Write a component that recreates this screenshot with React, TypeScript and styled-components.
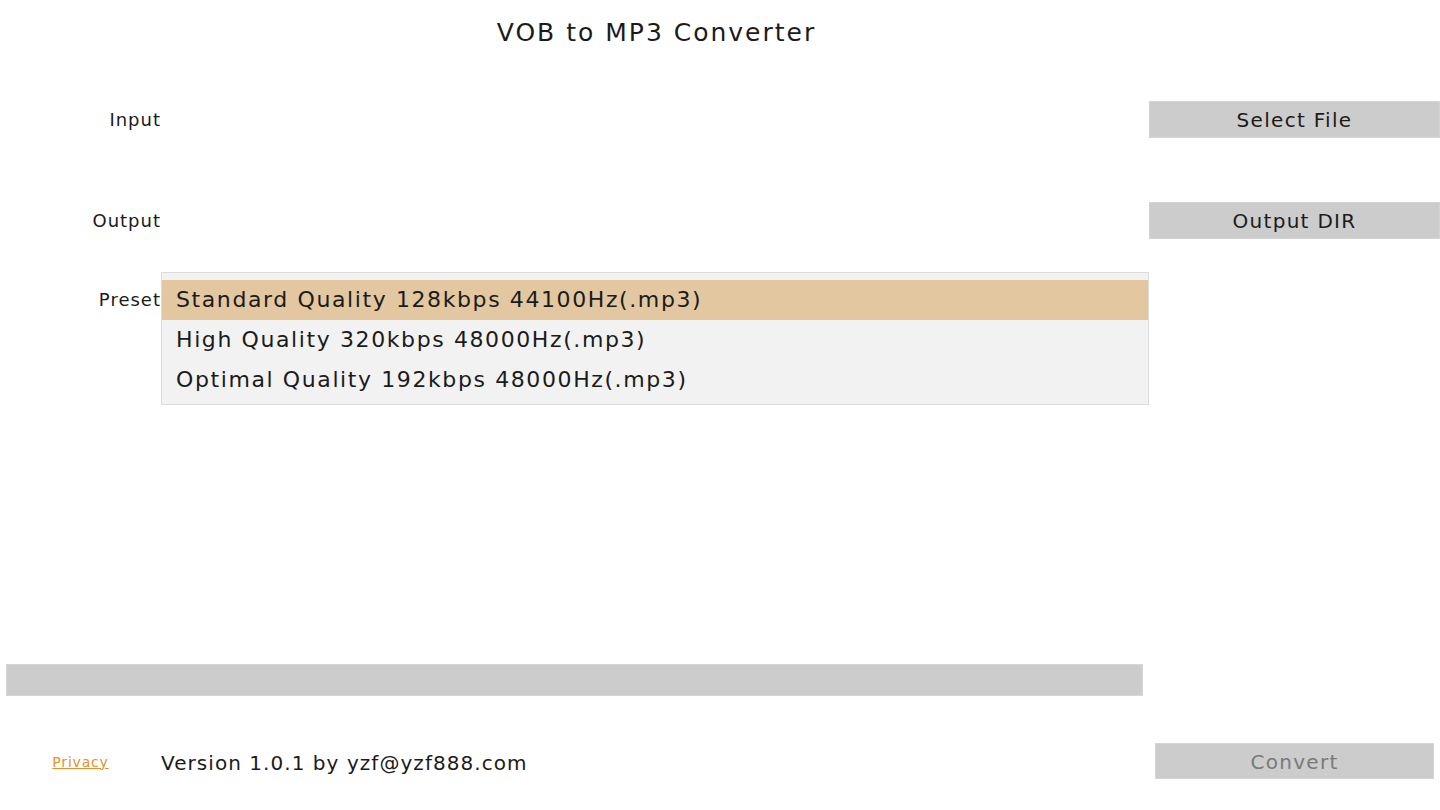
import React from "react";
import styled, { createGlobalStyle } from "styled-components";

const Global = createGlobalStyle`
  html, body { margin: 0; padding: 0; background: #ffffff; }
  body { font-family: "DejaVu Sans", "Open Sans", sans-serif; color: #1b1b1b; }
  * { box-sizing: border-box; }
`;

const Page = styled.div`
  width: 1440px;
  height: 810px;
  display: flex;
  flex-direction: column;
  overflow: hidden;
`;

const Title = styled.h1`
  width: 1313px;
  margin: 14px 0 0;
  font-size: 25px;
  line-height: 37px;
  font-weight: 400;
  letter-spacing: 2px;
  text-align: center;
`;

const Row = styled.div<{ $top: number }>`
  display: grid;
  grid-template-columns: 161px 988px 291px;
  margin-top: ${(p) => p.$top}px;
  align-items: center;
`;

const Label = styled.div<{ $start?: boolean }>`
  text-align: right;
  font-size: 18px;
  letter-spacing: 1px;
  line-height: 37px;
  padding-top: 1px;
  align-self: ${(p) => (p.$start ? "start" : "center")};
  margin-top: ${(p) => (p.$start ? "8px" : "0")};
`;

const Button = styled.button<{ $muted?: boolean }>`
  grid-column: 3;
  height: 37px;
  border: 1px solid #d4d4d4;
  background: #cccccc;
  font-family: inherit;
  font-size: 20px;
  letter-spacing: 1.3px;
  color: ${(p) => (p.$muted ? "#7a7a7a" : "#1b1b1b")};
  padding: 2px 0 0;
  cursor: pointer;
`;

const List = styled.div`
  grid-column: 2;
  border: 1px solid #dcdcdc;
  background: #f2f2f2;
  padding: 7px 0 4px;
  display: flex;
  flex-direction: column;
`;

const Option = styled.div<{ $selected?: boolean }>`
  height: 40px;
  line-height: 40px;
  padding-left: 14px;
  font-size: 22px;
  letter-spacing: 1.6px;
  background: ${(p) => (p.$selected ? "#e2c7a0" : "transparent")};
`;

const Progress = styled.div`
  margin: 259px 0 0 6px;
  width: 1137px;
  height: 32px;
  background: #cccccc;
  border: 1px solid #d6d6d6;
`;

const Footer = styled.div`
  display: grid;
  grid-template-columns: 161px 1fr 279px;
  align-items: center;
  margin-top: 47px;
  margin-right: 6px;
`;

const PrivacyLink = styled.a`
  text-align: center;
  color: #e0922e;
  font-size: 14px;
  letter-spacing: 0.8px;
  text-decoration: underline;
  cursor: pointer;
  padding-top: 1px;
`;

const Version = styled.div`
  font-size: 20px;
  letter-spacing: 1.05px;
  padding-top: 3px;
`;

const ConvertButton = styled(Button)`
  grid-column: 3;
  height: 36px;
`;

const options = [
  "Standard Quality 128kbps 44100Hz(.mp3)",
  "High Quality 320kbps 48000Hz(.mp3)",
  "Optimal Quality 192kbps 48000Hz(.mp3)",
];

export default function App() {
  return (
    <Page>
      <Global />
      <Title>VOB to MP3 Converter</Title>
      <Row $top={49}>
        <Label>Input</Label>
        <Button>Select File</Button>
      </Row>
      <Row $top={63}>
        <Label>Output</Label>
        <Button>Output DIR</Button>
      </Row>
      <Row $top={33}>
        <Label $start>Preset</Label>
        <List>
          {options.map((o, i) => (
            <Option key={o} $selected={i === 0}>
              {o}
            </Option>
          ))}
        </List>
      </Row>
      <Progress />
      <Footer>
        <PrivacyLink>Privacy</PrivacyLink>
        <Version>Version 1.0.1 by yzf@yzf888.com</Version>
        <ConvertButton $muted>Convert</ConvertButton>
      </Footer>
    </Page>
  );
}
